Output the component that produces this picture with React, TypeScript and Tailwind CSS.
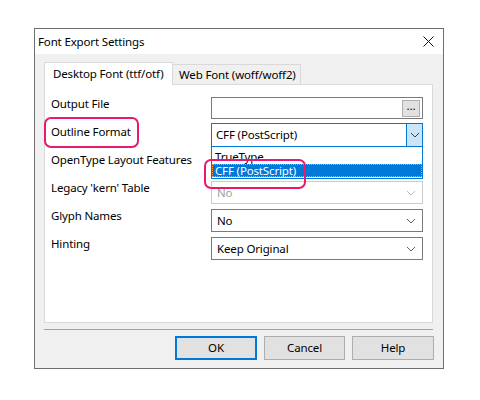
import React from "react";

const font = { fontFamily: '"Segoe UI", "Noto Sans", "Liberation Sans", sans-serif' };

function Chevron({ color = "#606060" }: { color?: string }) {
  return (
    <svg width="10" height="6" viewBox="0 0 10 6" className="shrink-0">
      <polyline points="1,1 5,5 9,1" fill="none" stroke={color} strokeWidth="1" />
    </svg>
  );
}

function Combo({ value, disabled = false }: { value: string; disabled?: boolean }) {
  return (
    <div
      className={`w-[212px] h-[23px] bg-white flex items-center justify-between pl-[5px] pr-[6px] border ${
        disabled ? "border-[#cccccc] text-[#a0a0a0]" : "border-[#7a7a7a] text-black"
      }`}
    >
      <span>{value}</span>
      <Chevron color={disabled ? "#bcbcbc" : "#606060"} />
    </div>
  );
}

export default function App() {
  const rows = ["Output File", "Outline Format", "OpenType Layout Features", "Legacy 'kern' Table", "Glyph Names", "Hinting"];

  return (
    <div
      className="relative w-[480px] h-[400px] bg-white pl-[34px] pt-[28px] text-[11.5px] tracking-[-0.15px] text-black whitespace-nowrap"
      style={font}
    >
      {/* Dialog window */}
      <div className="w-[410px] h-[341px] border border-[#6e6e6e] bg-[#f0f0f0] flex flex-col">
        {/* Title bar */}
        <div className="h-[25px] bg-white flex items-center justify-between pl-[3px] pr-[9px]">
          <span className="leading-none">Font Export Settings</span>
          <svg width="11" height="11" viewBox="0 0 11 11">
            <path d="M0.5 0.5 L10.5 10.5 M10.5 0.5 L0.5 10.5" stroke="#111" strokeWidth="1" />
          </svg>
        </div>

        <div className="flex-1 pl-[9px] pt-[8px]">
          {/* Tabs */}
          <div className="relative z-10 flex items-end h-[23px] -mb-px">
            <div className="w-[129px] h-[23px] bg-white border border-b-0 border-[#d9d9d9] pl-[8px] pt-[3px] leading-[16px]">
              Desktop Font (ttf/otf)
            </div>
            <div className="w-[129px] h-[21px] -ml-px bg-[#f0f0f0] border border-[#d9d9d9] pl-[6px] pt-[2px] leading-[16px]">
              Web Font (woff/woff2)
            </div>
          </div>

          {/* Tab panel */}
          <div className="relative w-[389px] h-[239px] bg-white border border-[#d9d9d9] pl-[6px] pt-[12px]">
            <div className="flex flex-col">
              {rows.map((label, i) => (
                <div key={label} className="h-[28px] flex items-start">
                  <div className="w-[160px] leading-[14px]">{label}</div>
                  {i === 0 && (
                    <div className="w-[212px] h-[22px] border border-[#7a7a7a] bg-white flex items-center justify-end pr-[2px]">
                      <div className="w-[18px] h-[17px] bg-[#e1e1e1] border border-[#adadad] flex items-center justify-center leading-none pb-[4px]">
                        ...
                      </div>
                    </div>
                  )}
                  {i === 1 && (
                    <div className="w-[212px] h-[24px] -mt-[2px] border border-[#0078d7] bg-white flex items-center justify-between pl-[4px]">
                      <span>CFF (PostScript)</span>
                      <div className="w-[16px] h-full bg-[#cce4f7] border-l border-[#0078d7] flex items-center justify-center">
                        <Chevron color="#404040" />
                      </div>
                    </div>
                  )}
                  {i === 3 && <Combo value="No" disabled />}
                  {i === 4 && <Combo value="No" />}
                  {i === 5 && <Combo value="Keep Original" />}
                </div>
              ))}
            </div>

            {/* Open dropdown list */}
            <div className="absolute left-[166px] top-[62px] w-[212px] h-[32px] bg-white border border-[#0078d7] border-t-0">
              <div className="h-[17px] pl-[3px] leading-[14px] pt-[3px] [clip-path:inset(5px_0_0_0)]">TrueType</div>
              <div className="h-[13px] bg-[#0078d7] text-white border border-dotted border-[#ff9a3c] pl-[2px] leading-[11px]">
                CFF (PostScript)
              </div>
            </div>
          </div>

          {/* Separator */}
          <div className="w-[389px] h-px bg-[#a0a0a0] mt-[6px]" />

          {/* Buttons */}
          <div className="flex justify-end gap-[7px] pr-[9px] mt-[6px]">
            <button className="w-[82px] h-[24px] bg-[#e1e1e1] border-2 border-[#0078d7]">OK</button>
            <button className="w-[81px] h-[24px] bg-[#e1e1e1] border border-[#adadad]">Cancel</button>
            <button className="w-[82px] h-[24px] bg-[#e1e1e1] border border-[#adadad]">Help</button>
          </div>
        </div>
      </div>

      {/* Annotation highlights */}
      <div className="absolute left-[44px] top-[117px] w-[95px] h-[31px] border-2 border-[#e8196e] rounded-[7px]" />
      <div className="absolute left-[204px] top-[159px] w-[102px] h-[30px] border-2 border-[#e8196e] rounded-[7px]" />
    </div>
  );
}
